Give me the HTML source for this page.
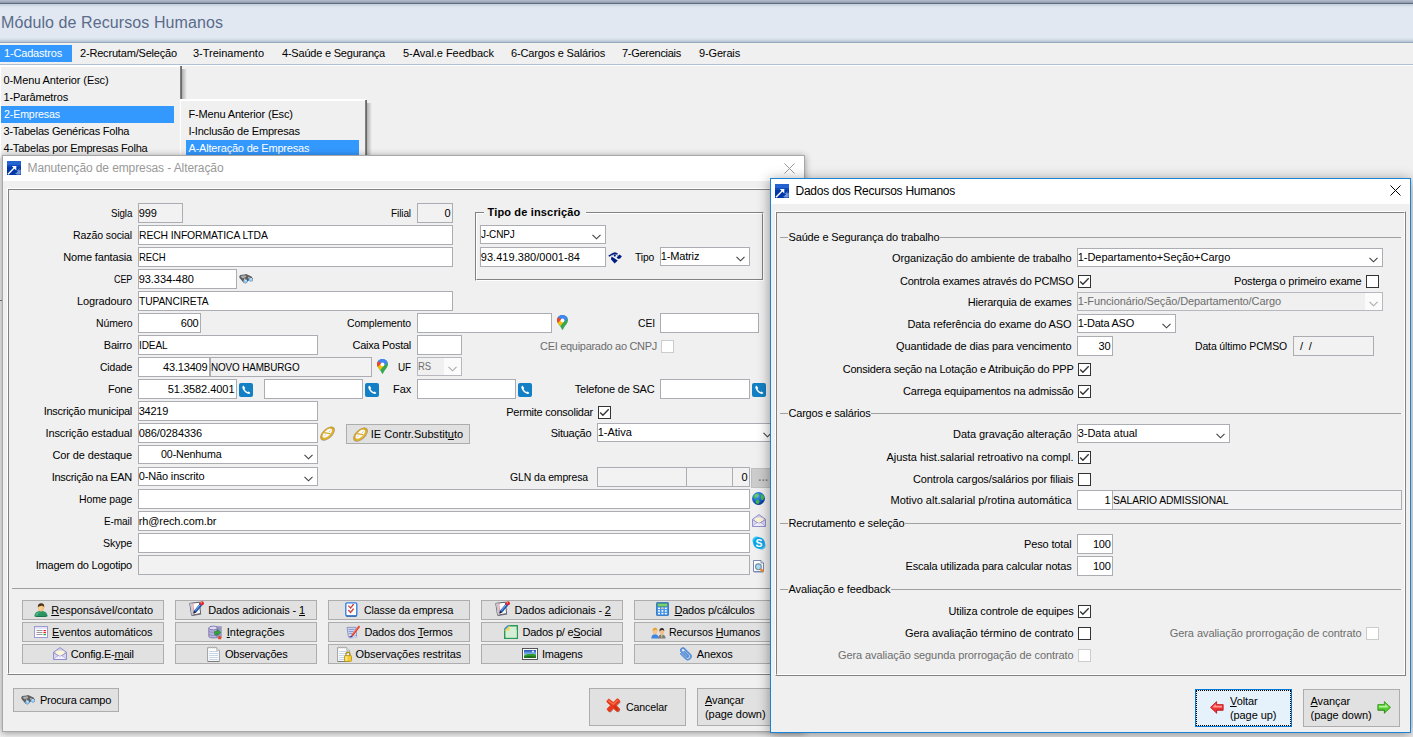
<!DOCTYPE html>
<html lang="pt-BR"><head><meta charset="utf-8"><title>Módulo de Recursos Humanos</title>
<style>
html,body{margin:0;padding:0;background:#f0f0f0;}
body{width:1413px;height:737px;overflow:hidden;font-family:"Liberation Sans",sans-serif;font-size:11px;}
#root{position:relative;width:1413px;height:737px;overflow:hidden;background:#f0f0f0;}
#root div,#root span.t,#root svg{position:absolute;box-sizing:border-box;}
span.t{white-space:pre;display:block;}
u{text-decoration:underline;text-underline-offset:1px;}

</style></head><body>
<div id="root">
<div style="left:0px;top:0px;width:1413px;height:3px;background:linear-gradient(#b3becd,#a3adbe 50%,#8b96a8);"></div>
<div style="left:0px;top:3px;width:1413px;height:1px;background:#5f6c80;"></div>
<div style="left:0px;top:4px;width:1413px;height:38px;background:linear-gradient(#c3cfdf 0,#ced8e4 1.5px,#d9e1eb 2.5px,#dfe6ef 3.5px,#e1e8f1 5px,#e1e8f1 33.5px,#dbe4ec 34.5px,#d3dce7 35.5px,#c6d1df 36.5px,#bac7d8 37.5px,#b4c2d4 38px);"></div>
<div style="left:0px;top:42px;width:1413px;height:1px;background:#98a8bc;"></div>
<span class="t" style="left:1.00px;top:12.90px;height:20px;line-height:20px;font-size:16px;letter-spacing:0.090px;color:#5b6b8b;">Módulo de Recursos Humanos</span>
<div style="left:0px;top:43px;width:1413px;height:22px;background:#f0f0f0;border-bottom:1px solid #b0bfd6;border-top:1px solid #f4f3f0;"></div>
<div style="left:0px;top:65px;width:1413px;height:1px;background:#fff;"></div>
<div style="left:0px;top:45px;width:72px;height:17px;background:#3399ff;"></div>
<span class="t" style="left:4.00px;top:46.00px;height:15px;line-height:15px;font-size:11px;letter-spacing:-0.175px;color:#fff;">1-Cadastros</span>
<span class="t" style="left:80.00px;top:46.00px;height:15px;line-height:15px;font-size:11px;letter-spacing:-0.182px;color:#000;">2-Recrutam/Seleção</span>
<span class="t" style="left:193.00px;top:46.00px;height:15px;line-height:15px;font-size:11px;letter-spacing:-0.010px;color:#000;">3-Treinamento</span>
<span class="t" style="left:282.00px;top:46.00px;height:15px;line-height:15px;font-size:11px;letter-spacing:-0.212px;color:#000;">4-Saúde e Segurança</span>
<span class="t" style="left:403.00px;top:46.00px;height:15px;line-height:15px;font-size:11px;letter-spacing:-0.031px;color:#000;">5-Aval.e Feedback</span>
<span class="t" style="left:511.00px;top:46.00px;height:15px;line-height:15px;font-size:11px;letter-spacing:-0.169px;color:#000;">6-Cargos e Salários</span>
<span class="t" style="left:622.00px;top:46.00px;height:15px;line-height:15px;font-size:11px;letter-spacing:-0.280px;color:#000;">7-Gerenciais</span>
<span class="t" style="left:699.00px;top:46.00px;height:15px;line-height:15px;font-size:11px;letter-spacing:-0.148px;color:#000;">9-Gerais</span>
<div style="left:0px;top:66px;width:182px;height:92px;background:#f0f0f0;border-top:1px solid #fff;border-left:1px solid #fff;"></div>
<div style="left:182px;top:69px;width:5px;height:30px;background:linear-gradient(90deg,#b0b0b0 0,rgba(205,205,205,0) 5px);"></div>
<div style="left:180px;top:66px;width:2px;height:33px;background:linear-gradient(90deg,#808080 0,#808080 1px,#686868 1px);"></div>
<div style="left:1px;top:106px;width:173px;height:17px;background:#3399ff;"></div>
<span class="t" style="left:3.50px;top:73.00px;height:15px;line-height:15px;font-size:11px;letter-spacing:-0.094px;color:#000;">0-Menu Anterior (Esc)</span>
<span class="t" style="left:3.50px;top:90.00px;height:15px;line-height:15px;font-size:11px;letter-spacing:-0.178px;color:#000;">1-Parâmetros</span>
<span class="t" style="left:3.50px;top:107.00px;height:15px;line-height:15px;font-size:11px;letter-spacing:-0.120px;color:#fff;transform:scaleX(0.9639);transform-origin:0 0;">2-Empresas</span>
<span class="t" style="left:3.50px;top:124.00px;height:15px;line-height:15px;font-size:11px;letter-spacing:-0.229px;color:#000;">3-Tabelas Genéricas Folha</span>
<span class="t" style="left:3.50px;top:141.00px;height:15px;line-height:15px;font-size:11px;letter-spacing:-0.207px;color:#000;">4-Tabelas por Empresas Folha</span>
<div style="left:180px;top:99px;width:186px;height:60px;background:#f0f0f0;border-top:2px solid #fff;border-left:1px solid #fff;"></div>
<div style="left:367px;top:103px;width:5px;height:56px;background:linear-gradient(90deg,#b0b0b0 0,rgba(205,205,205,0) 5px);"></div>
<div style="left:365px;top:100px;width:2px;height:59px;background:linear-gradient(90deg,#808080 0,#808080 1px,#686868 1px);"></div>
<div style="left:186px;top:140px;width:173px;height:17px;background:#3399ff;"></div>
<span class="t" style="left:188.50px;top:107.00px;height:15px;line-height:15px;font-size:11px;letter-spacing:-0.159px;color:#000;">F-Menu Anterior (Esc)</span>
<span class="t" style="left:188.50px;top:124.00px;height:15px;line-height:15px;font-size:11px;letter-spacing:-0.196px;color:#000;">I-Inclusão de Empresas</span>
<span class="t" style="left:188.50px;top:141.00px;height:15px;line-height:15px;font-size:11px;letter-spacing:-0.200px;color:#fff;">A-Alteração de Empresas</span>
<div style="left:0px;top:300px;width:3px;height:1px;background:#787878;"></div>
<div style="left:2px;top:155px;width:803px;height:577px;background:#f0f0f0;border:1px solid #a8a8a8;box-shadow:0 1px 7px rgba(0,0,0,.38);"></div>
<div style="left:3px;top:156px;width:801px;height:25px;background:#fff;"></div>
<svg style="left:7px;top:161px;" width="14" height="14" viewBox="0 0 14 14"><rect width="14" height="14" fill="#0038a8"/><rect width="14" height="4.5" fill="#2463d2"/><rect y="4.5" width="14" height="1.5" fill="#0f49bb"/><path d="M1 13.2 L7.6 6.6" stroke="#fff" stroke-width="1.4" fill="none"/><path d="M4.8 4.9 H9.3 V9.4 Z" fill="#fff"/><path d="M9.2 13.6 L12.6 6.2 L12.2 9.4 L13.8 8.4 L13.6 13.6Z" fill="#8fb0ea" opacity=".8"/><path d="M8.6 13 L10.2 11.4 M10.4 9.6 L11.2 8.8" stroke="#cfe0fa" stroke-width=".7"/></svg>
<span class="t" style="left:27.50px;top:159.50px;height:16px;line-height:16px;font-size:12px;letter-spacing:-0.102px;color:#999;">Manutenção de empresas - Alteração</span>
<svg style="left:784px;top:163px;" width="11" height="11" viewBox="0 0 11 11"><path d="M0.5 0.5 L10.5 10.5 M10.5 0.5 L0.5 10.5" stroke="#999" stroke-width="1" fill="none"/></svg>
<div style="left:7px;top:188px;width:792px;height:487px;border:1px solid #fff;border-right-color:#828282;border-bottom-color:#828282;"></div>
<div style="left:8px;top:189px;width:790px;height:485px;border:1px solid #828282;border-right-color:#fff;border-bottom-color:#fff;"></div>
<span class="t" style="left:110.75px;top:205.50px;height:15px;line-height:15px;font-size:11px;letter-spacing:-0.120px;color:#000;transform:scaleX(0.8903);transform-origin:0 0;">Sigla</span>
<div style="left:138px;top:203px;width:45px;height:20px;background:#f2f2f2;border:1px solid #abadb3;"></div>
<span class="t" style="left:138.75px;top:205.50px;height:15px;line-height:15px;font-size:11px;letter-spacing:-0.120px;color:#000;">999</span>
<span class="t" style="left:391.25px;top:205.50px;height:15px;line-height:15px;font-size:11px;letter-spacing:-0.120px;color:#000;transform:scaleX(0.9130);transform-origin:0 0;">Filial</span>
<div style="left:417px;top:203px;width:36px;height:20px;background:#f2f2f2;border:1px solid #abadb3;"></div>
<span class="t" style="left:444.52px;top:205.50px;height:15px;line-height:15px;font-size:11px;letter-spacing:-0.150px;color:#000;">0</span>
<span class="t" style="left:73.00px;top:227.50px;height:15px;line-height:15px;font-size:11px;letter-spacing:-0.120px;color:#000;transform:scaleX(0.9587);transform-origin:0 0;">Razão social</span>
<div style="left:138px;top:225px;width:315px;height:20px;background:#fff;border:1px solid #abadb3;"></div>
<span class="t" style="left:138.75px;top:227.50px;height:15px;line-height:15px;font-size:11px;letter-spacing:-0.120px;color:#000;transform:scaleX(0.9438);transform-origin:0 0;">RECH INFORMATICA LTDA</span>
<span class="t" style="left:63.25px;top:249.50px;height:15px;line-height:15px;font-size:11px;letter-spacing:-0.168px;color:#000;">Nome fantasia</span>
<div style="left:138px;top:247px;width:315px;height:20px;background:#fff;border:1px solid #abadb3;"></div>
<span class="t" style="left:138.75px;top:249.50px;height:15px;line-height:15px;font-size:11px;letter-spacing:-0.120px;color:#000;transform:scaleX(0.8634);transform-origin:0 0;">RECH</span>
<span class="t" style="left:113.75px;top:271.50px;height:15px;line-height:15px;font-size:11px;letter-spacing:-0.120px;color:#000;transform:scaleX(0.8197);transform-origin:0 0;">CEP</span>
<div style="left:138px;top:269px;width:99px;height:20px;background:#fff;border:1px solid #abadb3;"></div>
<span class="t" style="left:138.75px;top:271.50px;height:15px;line-height:15px;font-size:11px;letter-spacing:-0.067px;color:#000;">93.334-480</span>
<span class="t" style="left:77.00px;top:293.50px;height:15px;line-height:15px;font-size:11px;letter-spacing:-0.128px;color:#000;">Logradouro</span>
<div style="left:138px;top:291px;width:315px;height:20px;background:#fff;border:1px solid #abadb3;"></div>
<span class="t" style="left:138.75px;top:293.50px;height:15px;line-height:15px;font-size:11px;letter-spacing:-0.120px;color:#000;transform:scaleX(0.9306);transform-origin:0 0;">TUPANCIRETA</span>
<span class="t" style="left:95.50px;top:315.50px;height:15px;line-height:15px;font-size:11px;letter-spacing:-0.120px;color:#000;transform:scaleX(0.9504);transform-origin:0 0;">Número</span>
<div style="left:138px;top:313px;width:63px;height:20px;background:#fff;border:1px solid #abadb3;"></div>
<span class="t" style="left:180.75px;top:315.50px;height:15px;line-height:15px;font-size:11px;letter-spacing:-0.203px;color:#000;">600</span>
<span class="t" style="left:347.00px;top:315.50px;height:15px;line-height:15px;font-size:11px;letter-spacing:-0.120px;color:#000;transform:scaleX(0.9529);transform-origin:0 0;">Complemento</span>
<div style="left:417px;top:313px;width:135px;height:20px;background:#fff;border:1px solid #abadb3;"></div>
<span class="t" style="left:637.50px;top:315.50px;height:15px;line-height:15px;font-size:11px;letter-spacing:-0.120px;color:#000;transform:scaleX(0.9453);transform-origin:0 0;">CEI</span>
<div style="left:660px;top:313px;width:99px;height:20px;background:#fff;border:1px solid #abadb3;"></div>
<span class="t" style="left:103.75px;top:337.50px;height:15px;line-height:15px;font-size:11px;letter-spacing:-0.182px;color:#000;">Bairro</span>
<div style="left:138px;top:335px;width:180px;height:20px;background:#fff;border:1px solid #abadb3;"></div>
<span class="t" style="left:138.75px;top:337.50px;height:15px;line-height:15px;font-size:11px;letter-spacing:-0.120px;color:#000;transform:scaleX(0.9136);transform-origin:0 0;">IDEAL</span>
<span class="t" style="left:352.50px;top:337.50px;height:15px;line-height:15px;font-size:11px;letter-spacing:-0.272px;color:#000;">Caixa Postal</span>
<div style="left:417px;top:335px;width:45px;height:20px;background:#fff;border:1px solid #abadb3;"></div>
<span class="t" style="left:540.00px;top:338.50px;height:15px;line-height:15px;font-size:11px;letter-spacing:-0.296px;color:#6d6d6d;">CEI equiparado ao CNPJ</span>
<div style="left:661px;top:340px;width:13px;height:13px;background:#fff;border:1px solid #cccccc;"></div>
<span class="t" style="left:100.00px;top:359.50px;height:15px;line-height:15px;font-size:11px;letter-spacing:-0.120px;color:#000;transform:scaleX(0.9373);transform-origin:0 0;">Cidade</span>
<div style="left:138px;top:357px;width:72px;height:20px;background:#fff;border:1px solid #abadb3;"></div>
<span class="t" style="left:163.00px;top:359.50px;height:15px;line-height:15px;font-size:11px;letter-spacing:-0.174px;color:#000;">43.13409</span>
<div style="left:210px;top:357px;width:162px;height:20px;background:#f2f2f2;border:1px solid #abadb3;"></div>
<span class="t" style="left:210.75px;top:359.50px;height:15px;line-height:15px;font-size:11px;letter-spacing:-0.120px;color:#000;transform:scaleX(0.8969);transform-origin:0 0;">NOVO HAMBURGO</span>
<span class="t" style="left:398.25px;top:359.50px;height:15px;line-height:15px;font-size:11px;letter-spacing:-0.120px;color:#000;transform:scaleX(0.9008);transform-origin:0 0;">UF</span>
<div style="left:417px;top:357px;width:45px;height:19px;background:#f0f0f0;border:1px solid #b6b8be;"></div>
<div style="left:444px;top:358px;width:17px;height:17px;background:#fbfbfb;"></div>
<svg style="left:448px;top:365.6px;" width="9" height="6" viewBox="0 0 9 6"><path d="M0.5 0.8 L4.5 4.8 L8.5 0.8" stroke="#aaa" stroke-width="1.1" fill="none"/></svg>
<span class="t" style="left:417.75px;top:358.50px;height:15px;line-height:15px;font-size:11px;letter-spacing:-0.120px;color:#6d6d6d;transform:scaleX(0.8643);transform-origin:0 0;">RS</span>
<span class="t" style="left:108.00px;top:381.50px;height:15px;line-height:15px;font-size:11px;letter-spacing:-0.270px;color:#000;">Fone</span>
<div style="left:138px;top:379px;width:99px;height:20px;background:#fff;border:1px solid #abadb3;"></div>
<span class="t" style="left:167.75px;top:381.50px;height:15px;line-height:15px;font-size:11px;letter-spacing:-0.046px;color:#000;">51.3582.4001</span>
<div style="left:264px;top:379px;width:99px;height:20px;background:#fff;border:1px solid #abadb3;"></div>
<span class="t" style="left:393.00px;top:381.50px;height:15px;line-height:15px;font-size:11px;letter-spacing:-0.031px;color:#000;">Fax</span>
<div style="left:417px;top:379px;width:99px;height:20px;background:#fff;border:1px solid #abadb3;"></div>
<span class="t" style="left:574.75px;top:381.50px;height:15px;line-height:15px;font-size:11px;letter-spacing:-0.188px;color:#000;">Telefone de SAC</span>
<div style="left:660px;top:379px;width:90px;height:20px;background:#fff;border:1px solid #abadb3;"></div>
<span class="t" style="left:43.75px;top:403.50px;height:15px;line-height:15px;font-size:11px;letter-spacing:-0.279px;color:#000;">Inscrição municipal</span>
<div style="left:138px;top:401px;width:180px;height:20px;background:#fff;border:1px solid #abadb3;"></div>
<span class="t" style="left:138.75px;top:403.50px;height:15px;line-height:15px;font-size:11px;letter-spacing:-0.269px;color:#000;">34219</span>
<span class="t" style="left:506.25px;top:404.75px;height:15px;line-height:15px;font-size:11px;letter-spacing:-0.241px;color:#000;">Permite consolidar</span>
<div style="left:598px;top:406px;width:13px;height:13px;background:#fff;border:1px solid #333;"></div>
<svg style="left:598px;top:406px;" width="13" height="13" viewBox="0 0 13 13"><path d="M2.2 6.5 L4.9 9.2 L10.7 3.3" stroke="#333" stroke-width="1.35" fill="none"/></svg>
<span class="t" style="left:45.50px;top:425.50px;height:15px;line-height:15px;font-size:11px;letter-spacing:-0.121px;color:#000;">Inscrição estadual</span>
<div style="left:138px;top:423px;width:180px;height:20px;background:#fff;border:1px solid #abadb3;"></div>
<span class="t" style="left:138.75px;top:425.50px;height:15px;line-height:15px;font-size:11px;letter-spacing:-0.089px;color:#000;">086/0284336</span>
<span class="t" style="left:550.75px;top:425.50px;height:15px;line-height:15px;font-size:11px;letter-spacing:-0.289px;color:#000;">Situação</span>
<div style="left:597px;top:423px;width:180px;height:19px;background:#fff;border:1px solid #abadb3;"></div>
<svg style="left:763px;top:431.6px;" width="9" height="6" viewBox="0 0 9 6"><path d="M0.5 0.8 L4.5 4.8 L8.5 0.8" stroke="#404040" stroke-width="1.1" fill="none"/></svg>
<span class="t" style="left:597.75px;top:424.50px;height:15px;line-height:15px;font-size:11px;letter-spacing:-0.036px;color:#000;">1-Ativa</span>
<span class="t" style="left:52.50px;top:447.50px;height:15px;line-height:15px;font-size:11px;letter-spacing:-0.123px;color:#000;">Cor de destaque</span>
<div style="left:138px;top:445px;width:180px;height:19px;background:#fff;border:1px solid #abadb3;"></div>
<svg style="left:304px;top:453.6px;" width="9" height="6" viewBox="0 0 9 6"><path d="M0.5 0.8 L4.5 4.8 L8.5 0.8" stroke="#404040" stroke-width="1.1" fill="none"/></svg>
<span class="t" style="left:160.75px;top:446.50px;height:15px;line-height:15px;font-size:11px;letter-spacing:-0.120px;color:#000;transform:scaleX(0.9696);transform-origin:0 0;">00-Nenhuma</span>
<span class="t" style="left:51.75px;top:469.50px;height:15px;line-height:15px;font-size:11px;letter-spacing:-0.296px;color:#000;">Inscrição na EAN</span>
<div style="left:138px;top:467px;width:180px;height:19px;background:#fff;border:1px solid #abadb3;"></div>
<svg style="left:304px;top:475.6px;" width="9" height="6" viewBox="0 0 9 6"><path d="M0.5 0.8 L4.5 4.8 L8.5 0.8" stroke="#404040" stroke-width="1.1" fill="none"/></svg>
<span class="t" style="left:138.75px;top:468.50px;height:15px;line-height:15px;font-size:11px;letter-spacing:-0.151px;color:#000;">0-Não inscrito</span>
<span class="t" style="left:509.50px;top:470.25px;height:15px;line-height:15px;font-size:11px;letter-spacing:-0.120px;color:#000;transform:scaleX(0.9502);transform-origin:0 0;">GLN da empresa</span>
<div style="left:597px;top:467px;width:90px;height:20px;background:#f2f2f2;border:1px solid #abadb3;"></div>
<div style="left:686px;top:467px;width:47px;height:20px;background:#f2f2f2;border:1px solid #abadb3;"></div>
<div style="left:732px;top:467px;width:18px;height:20px;background:#f2f2f2;border:1px solid #abadb3;"></div>
<span class="t" style="left:741.52px;top:469.50px;height:15px;line-height:15px;font-size:11px;letter-spacing:-0.150px;color:#000;">0</span>
<div style="left:751px;top:468px;width:21px;height:20px;background:#cccccc;border:1px solid #bfbfbf;"></div>
<span class="t" style="left:758.30px;top:470.30px;height:15px;line-height:15px;font-size:11px;letter-spacing:0.300px;color:#838383;font-weight:bold;">...</span>
<span class="t" style="left:78.75px;top:491.50px;height:15px;line-height:15px;font-size:11px;letter-spacing:-0.120px;color:#000;transform:scaleX(0.9544);transform-origin:0 0;">Home page</span>
<div style="left:138px;top:489px;width:612px;height:20px;background:#fff;border:1px solid #abadb3;"></div>
<span class="t" style="left:104.25px;top:513.50px;height:15px;line-height:15px;font-size:11px;letter-spacing:-0.120px;color:#000;transform:scaleX(0.9113);transform-origin:0 0;">E-mail</span>
<div style="left:138px;top:511px;width:612px;height:20px;background:#fff;border:1px solid #abadb3;"></div>
<span class="t" style="left:138.75px;top:513.50px;height:15px;line-height:15px;font-size:11px;letter-spacing:-0.109px;color:#000;">rh@rech.com.br</span>
<span class="t" style="left:103.00px;top:535.50px;height:15px;line-height:15px;font-size:11px;letter-spacing:-0.120px;color:#000;transform:scaleX(0.9674);transform-origin:0 0;">Skype</span>
<div style="left:138px;top:533px;width:612px;height:20px;background:#fff;border:1px solid #abadb3;"></div>
<span class="t" style="left:35.75px;top:557.50px;height:15px;line-height:15px;font-size:11px;letter-spacing:-0.225px;color:#000;">Imagem do Logotipo</span>
<div style="left:138px;top:555px;width:612px;height:20px;background:#f2f2f2;border:1px solid #abadb3;"></div>
<div style="left:475px;top:212px;width:289px;height:69px;border:1px solid #828282;border-right-color:#fff;border-bottom-color:#fff;"></div>
<div style="left:476px;top:213px;width:287px;height:67px;border:1px solid #fff;border-right-color:#828282;border-bottom-color:#828282;"></div>
<div style="left:484px;top:205px;width:102px;height:14px;background:#f0f0f0;"></div>
<span class="t" style="left:487.50px;top:204.50px;height:15px;line-height:15px;font-size:11px;letter-spacing:0.160px;color:#000;font-weight:bold;">Tipo de inscrição</span>
<div style="left:480px;top:225px;width:126px;height:19px;background:#fff;border:1px solid #abadb3;"></div>
<svg style="left:592px;top:233.6px;" width="9" height="6" viewBox="0 0 9 6"><path d="M0.5 0.8 L4.5 4.8 L8.5 0.8" stroke="#404040" stroke-width="1.1" fill="none"/></svg>
<span class="t" style="left:480.75px;top:226.50px;height:15px;line-height:15px;font-size:11px;letter-spacing:-0.120px;color:#000;transform:scaleX(0.9080);transform-origin:0 0;">J-CNPJ</span>
<div style="left:480px;top:247px;width:126px;height:20px;background:#fff;border:1px solid #abadb3;"></div>
<span class="t" style="left:480.75px;top:249.50px;height:15px;line-height:15px;font-size:11px;letter-spacing:0.043px;color:#000;">93.419.380/0001-84</span>
<span class="t" style="left:635.00px;top:249.50px;height:15px;line-height:15px;font-size:11px;letter-spacing:-0.120px;color:#000;transform:scaleX(0.9381);transform-origin:0 0;">Tipo</span>
<div style="left:660px;top:247px;width:90px;height:19px;background:#fff;border:1px solid #abadb3;"></div>
<svg style="left:736px;top:255.6px;" width="9" height="6" viewBox="0 0 9 6"><path d="M0.5 0.8 L4.5 4.8 L8.5 0.8" stroke="#404040" stroke-width="1.1" fill="none"/></svg>
<span class="t" style="left:660.75px;top:248.50px;height:15px;line-height:15px;font-size:11px;letter-spacing:-0.154px;color:#000;">1-Matriz</span>
<svg style="left:239px;top:382.5px;" width="14" height="14" viewBox="0 0 14 14"><rect width="14" height="14" rx="2" fill="#137fc4"/><path d="M4.3 2.6 C3.2 3.3 3.1 4.6 3.8 6.1 C4.8 8.1 6.3 9.7 8.3 10.6 C9.7 11.2 10.8 11 11.4 10 L9.7 8.4 L8.5 9.1 C7.3 8.5 6.1 7.3 5.5 6 L6.3 4.9 Z" fill="#fff"/></svg>
<svg style="left:365px;top:382.5px;" width="14" height="14" viewBox="0 0 14 14"><rect width="14" height="14" rx="2" fill="#137fc4"/><path d="M4.3 2.6 C3.2 3.3 3.1 4.6 3.8 6.1 C4.8 8.1 6.3 9.7 8.3 10.6 C9.7 11.2 10.8 11 11.4 10 L9.7 8.4 L8.5 9.1 C7.3 8.5 6.1 7.3 5.5 6 L6.3 4.9 Z" fill="#fff"/></svg>
<svg style="left:518px;top:382.5px;" width="14" height="14" viewBox="0 0 14 14"><rect width="14" height="14" rx="2" fill="#137fc4"/><path d="M4.3 2.6 C3.2 3.3 3.1 4.6 3.8 6.1 C4.8 8.1 6.3 9.7 8.3 10.6 C9.7 11.2 10.8 11 11.4 10 L9.7 8.4 L8.5 9.1 C7.3 8.5 6.1 7.3 5.5 6 L6.3 4.9 Z" fill="#fff"/></svg>
<svg style="left:752px;top:382.5px;" width="14" height="14" viewBox="0 0 14 14"><rect width="14" height="14" rx="2" fill="#137fc4"/><path d="M4.3 2.6 C3.2 3.3 3.1 4.6 3.8 6.1 C4.8 8.1 6.3 9.7 8.3 10.6 C9.7 11.2 10.8 11 11.4 10 L9.7 8.4 L8.5 9.1 C7.3 8.5 6.1 7.3 5.5 6 L6.3 4.9 Z" fill="#fff"/></svg>
<svg style="left:239px;top:274px;" width="15" height="10" viewBox="0 0 15 10"><path d="M0.3 2.2 L1.2 0.9 L5.5 0.4 L7 0.1 L8.2 0.6 L12.5 2.6 L14 4.8 L13.6 7 L11.6 7.6 L9.8 6.6 L8.6 7.4 L8 8.8 L6.2 9.4 L4.3 8.4 L0.4 3.8 Z" fill="#5e5e5e"/><path d="M1.6 2 L6.5 1.2 L7.4 3 L3.2 4.2Z" fill="#b0b0b0"/><path d="M4.6 4.8 L6.3 4.4 L5.8 6 Z M8.8 3.2 L10.8 3.6 L10 4.8Z" fill="#fff"/><circle cx="6.4" cy="7.2" r="1.9" fill="#86c6fb"/><circle cx="11.8" cy="5.6" r="1.9" fill="#86c6fb"/><circle cx="6.6" cy="6.6" r=".8" fill="#d8eeff"/><circle cx="12" cy="5" r=".8" fill="#d8eeff"/></svg>
<svg style="left:608px;top:251.5px;" width="14" height="12" viewBox="0 0 14 12"><g fill="#001e82"><path d="M0.2 3.7 L4.6 1 L7 0.2 L9.6 1.2 L9.9 2.3 L7.2 1.9 L4.8 2.6 L1.5 4.8Z"/><circle cx="6.8" cy="3.6" r="1.1"/><path d="M4 3.2 A3.2 2.6 0 0 1 9.6 3.4" stroke="#001e82" stroke-width=".8" fill="none"/><path d="M8.6 5.6 L11.4 2.4 L13.9 4.2 L12.2 6.4 L10.2 6.9Z"/><path d="M3.6 4.6 L9.8 8.6 L6.6 11.4 L2.9 7.2Z"/></g></svg>
<svg style="left:556.7px;top:315.3px;" width="11" height="15" viewBox="0 0 11 15"><defs><clipPath id="pc556"><path d="M5.5 0 C8.6 0 11 2.3 11 5.3 C11 7.4 9.6 9 8.2 10.8 C7.2 12.1 6.4 13.3 6 14.6 C5.8 15.1 5.2 15.1 5 14.6 C4.6 13.3 3.8 12.1 2.8 10.8 C1.4 9 0 7.4 0 5.3 C0 2.3 2.4 0 5.5 0Z"/></clipPath></defs><g clip-path="url(#pc556)"><rect width="11" height="15" fill="#34a853"/><path d="M0 0 H11 V3.2 L7.6 6.6 L3.6 4.2 L1.5 1.8Z" fill="#4285f4"/><path d="M0 1.5 L1.8 2.2 L4.2 4.6 L1 8.4 L0 8Z" fill="#ea4335"/><path d="M4.2 4.6 L6.6 7 L3.2 11.2 L0.6 8Z" fill="#fbbc04"/><path d="M0 0 H4.5 L1.5 3Z" fill="#4285f4"/></g><circle cx="5.5" cy="5.4" r="1.9" fill="#fff"/></svg>
<svg style="left:376.5px;top:359.3px;" width="11" height="15" viewBox="0 0 11 15"><defs><clipPath id="pc376"><path d="M5.5 0 C8.6 0 11 2.3 11 5.3 C11 7.4 9.6 9 8.2 10.8 C7.2 12.1 6.4 13.3 6 14.6 C5.8 15.1 5.2 15.1 5 14.6 C4.6 13.3 3.8 12.1 2.8 10.8 C1.4 9 0 7.4 0 5.3 C0 2.3 2.4 0 5.5 0Z"/></clipPath></defs><g clip-path="url(#pc376)"><rect width="11" height="15" fill="#34a853"/><path d="M0 0 H11 V3.2 L7.6 6.6 L3.6 4.2 L1.5 1.8Z" fill="#4285f4"/><path d="M0 1.5 L1.8 2.2 L4.2 4.6 L1 8.4 L0 8Z" fill="#ea4335"/><path d="M4.2 4.6 L6.6 7 L3.2 11.2 L0.6 8Z" fill="#fbbc04"/><path d="M0 0 H4.5 L1.5 3Z" fill="#4285f4"/></g><circle cx="5.5" cy="5.4" r="1.9" fill="#fff"/></svg>
<svg style="left:319.8px;top:425.6px;" width="15" height="15" viewBox="0 0 15 15"><g transform="rotate(-43 7.5 7.5)"><ellipse cx="7.5" cy="7.6" rx="8.9" ry="5" fill="#8f8670" opacity=".75"/><ellipse cx="7.5" cy="7.4" rx="8.4" ry="4.5" fill="#d5a422"/><ellipse cx="7.5" cy="8.6" rx="7.4" ry="3" fill="#e0b22e"/><ellipse cx="7.5" cy="7.1" rx="6" ry="2.8" fill="#fdfcf8"/><path d="M5.6 4.6 L9.4 9.6" stroke="#d5a422" stroke-width="1.2"/><path d="M3 7.2 L5.6 6.9 M9.4 7.5 L12 7.1" stroke="#b8b2a2" stroke-width=".6"/></g></svg>
<svg style="left:752px;top:492px;" width="13" height="13" viewBox="0 0 13 13"><defs><radialGradient id="gg" cx=".38" cy=".3" r=".75"><stop offset="0" stop-color="#5aa6f8"/><stop offset=".55" stop-color="#1b5fd6"/><stop offset="1" stop-color="#0a2f8a"/></radialGradient></defs><circle cx="6.5" cy="6.5" r="6.4" fill="url(#gg)"/><path d="M1.4 4.4 L3 2.2 L5.2 1.2 L7 1.8 L6.6 3.4 L5 4.6 L4.6 6.2 L3 7 L1.6 6Z M8.2 2 L10.6 2.4 L12.2 4.6 L11.6 7.4 L10 8.2 L8.6 6.4 L9 4.2Z M3.6 8.4 L5.8 7.6 L7.6 9 L7 11.4 L5 12 L3.8 10.6Z" fill="#3dbb46"/><ellipse cx="4.6" cy="3.6" rx="2.4" ry="1.6" fill="#fff" opacity=".22"/></svg>
<svg style="left:752px;top:514px;" width="14" height="13" viewBox="0 0 14 13"><path d="M0.5 5.2 L7 0.6 L13.5 5.2 V12.5 H0.5Z" fill="#d9d6f3" stroke="#8a86c4" stroke-width=".9"/><path d="M2.2 4.6 Q7 1.4 11.8 4.6 L11.8 7 L7 9.4 L2.2 7Z" fill="#fbf6d8" stroke="#b9b4dc" stroke-width=".5"/><path d="M0.6 5.6 L7 9.6 L13.4 5.6 M0.8 12.2 L5.4 8.6 M13.2 12.2 L8.6 8.6" stroke="#8a86c4" stroke-width=".8" fill="none"/><path d="M0.9 12.1 L5.6 8.8 L7 9.7 L8.4 8.8 L13.1 12.1Z" fill="#f1effc"/></svg>
<svg style="left:752px;top:536px;" width="14" height="14" viewBox="0 0 14 14"><circle cx="4.6" cy="4.6" r="4.2" fill="#3cc1f3"/><circle cx="9.4" cy="9.4" r="4.2" fill="#3cc1f3"/><circle cx="7" cy="7" r="5.8" fill="#0aa5e6"/><text x="7" y="10.8" text-anchor="middle" font-family="Liberation Sans,sans-serif" font-weight="bold" font-size="10.5" fill="#fff">S</text></svg>
<svg style="left:753.4px;top:559.5px;" width="12" height="13" viewBox="0 0 12 13"><path d="M0.5 0.5 H8 L10.5 3 V11.5 H0.5Z" fill="#fff" stroke="#6b7aa8" stroke-width=".9"/><path d="M8 0.5 V3 H10.5" fill="#dfe5f5" stroke="#6b7aa8" stroke-width=".7"/><circle cx="5.4" cy="6.8" r="2.9" fill="#a8dcf8" stroke="#7d8fa5" stroke-width="1.1"/><path d="M8.2 9.6 L9.8 11.2" stroke="#f08a24" stroke-width="2.2" stroke-linecap="round"/><path d="M1 12.3 H10.2" stroke="#9aa3c4" stroke-width=".8"/></svg>
<div style="left:12px;top:588px;width:762px;height:1px;background:#a0a0a0;"></div>
<div style="left:346px;top:424px;width:124px;height:20px;background:#e1e1e1;border:1px solid #adadad;"></div>
<svg style="left:352.6px;top:426.6px;" width="15" height="15" viewBox="0 0 15 15"><g transform="rotate(-43 7.5 7.5)"><ellipse cx="7.5" cy="7.6" rx="8.9" ry="5" fill="#8f8670" opacity=".75"/><ellipse cx="7.5" cy="7.4" rx="8.4" ry="4.5" fill="#d5a422"/><ellipse cx="7.5" cy="8.6" rx="7.4" ry="3" fill="#e0b22e"/><ellipse cx="7.5" cy="7.1" rx="6" ry="2.8" fill="#fdfcf8"/><path d="M5.6 4.6 L9.4 9.6" stroke="#d5a422" stroke-width="1.2"/><path d="M3 7.2 L5.6 6.9 M9.4 7.5 L12 7.1" stroke="#b8b2a2" stroke-width=".6"/></g></svg>
<span class="t" style="left:370.75px;top:427.00px;height:15px;line-height:15px;font-size:11px;letter-spacing:0.041px;color:#000;">IE Contr.Substit<u>u</u>to</span>
<div style="left:22px;top:600px;width:142px;height:20px;background:#e1e1e1;border:1px solid #adadad;"></div>
<svg style="left:33.5px;top:602.8px;" width="14" height="14" viewBox="0 0 14 14"><path d="M0.6 13.2 C0.6 9.6 3 8 7 8 C11 8 13.4 9.6 13.4 13.2 C11 14.2 3 14.2 0.6 13.2Z" fill="#2b9463"/><path d="M1.2 13 C1.6 10.4 3.4 9 7 9 C4.6 10 3.4 11.4 3.2 13.6Z" fill="#4db684"/><path d="M0.6 13.2 C3 14.3 11 14.3 13.4 13.2 L13.4 12.4 C10 13.4 4 13.4 0.6 12.4Z" fill="#176b43"/><ellipse cx="7" cy="4.8" rx="3.1" ry="3.6" fill="#f4c07a"/><path d="M3.8 4.4 C3.6 1.4 5.4 0.2 7.2 0.3 C9.4 0.4 10.6 1.8 10.2 4.4 C9.4 2.8 8 2.6 6.4 2.9 C5.2 3.1 4.4 3.4 3.8 4.4Z" fill="#4a2f14"/><ellipse cx="6.2" cy="5.6" rx="1.6" ry="2" fill="#fbd9a4" opacity=".7"/></svg>
<span class="t" style="left:51.25px;top:603.00px;height:15px;line-height:15px;font-size:11px;letter-spacing:-0.052px;color:#000;"><u>R</u>esponsável/contato</span>
<div style="left:175px;top:600px;width:142px;height:20px;background:#e1e1e1;border:1px solid #adadad;"></div>
<svg style="left:188.6px;top:601.4px;" width="15" height="15" viewBox="0 0 15 15"><path d="M0.8 2.4 L10.4 1.2 L11.6 12.6 L2.6 14.2Z" fill="#fff" stroke="#5c5c68" stroke-width="1"/><path d="M1 2.6 L3.2 2.3 L4.6 13.8 L2.7 14.1Z" fill="#c9c9d6"/><path d="M3.8 2.4 L5.2 13.6" stroke="#e07c78" stroke-width=".8"/><path d="M2.6 14.2 L11.6 12.6 L12.4 13.4 L3.2 15Z" fill="#6e6e78"/><path d="M5 9.6 L10.8 2.8 L13.2 4.6 L7.2 11.6 L4.4 12.4Z" fill="#2558b0"/><path d="M6.2 9.6 L11.2 3.8" stroke="#86b4f0" stroke-width="1"/><circle cx="12.9" cy="2.3" r="2.1" fill="#d8242a"/><circle cx="12.3" cy="1.7" r=".8" fill="#f79a9a"/><path d="M4.4 12.4 L5 9.9 L7 11.5Z" fill="#1a1a1a"/></svg>
<span class="t" style="left:208.25px;top:603.00px;height:15px;line-height:15px;font-size:11px;letter-spacing:-0.146px;color:#000;">Dados adicionais - <u>1</u></span>
<div style="left:328px;top:600px;width:142px;height:20px;background:#e1e1e1;border:1px solid #adadad;"></div>
<svg style="left:344.8px;top:601.6px;" width="13" height="15" viewBox="0 0 13 15"><rect x=".8" y=".8" width="11" height="13" rx="1.2" fill="#fff" stroke="#2b7be0" stroke-width="1.3"/><path d="M1.4 14.2 H11.6" stroke="#1c4e9a" stroke-width=".9"/><path d="M3.4 3.6 L5.6 6 L8.6 2.2 M3.4 8 L5.6 10.4 L8.6 6.6" stroke="#d42a2a" stroke-width="1.3" fill="none"/><path d="M3.6 4.8 H8 M3.6 9.2 H8" stroke="#aaa" stroke-width=".6"/></svg>
<span class="t" style="left:363.75px;top:603.00px;height:15px;line-height:15px;font-size:11px;letter-spacing:-0.120px;color:#000;transform:scaleX(0.9624);transform-origin:0 0;">Classe da empresa</span>
<div style="left:481px;top:600px;width:142px;height:20px;background:#e1e1e1;border:1px solid #adadad;"></div>
<svg style="left:494.6px;top:601.4px;" width="15" height="15" viewBox="0 0 15 15"><path d="M0.8 2.4 L10.4 1.2 L11.6 12.6 L2.6 14.2Z" fill="#fff" stroke="#5c5c68" stroke-width="1"/><path d="M1 2.6 L3.2 2.3 L4.6 13.8 L2.7 14.1Z" fill="#c9c9d6"/><path d="M3.8 2.4 L5.2 13.6" stroke="#e07c78" stroke-width=".8"/><path d="M2.6 14.2 L11.6 12.6 L12.4 13.4 L3.2 15Z" fill="#6e6e78"/><path d="M5 9.6 L10.8 2.8 L13.2 4.6 L7.2 11.6 L4.4 12.4Z" fill="#2558b0"/><path d="M6.2 9.6 L11.2 3.8" stroke="#86b4f0" stroke-width="1"/><circle cx="12.9" cy="2.3" r="2.1" fill="#d8242a"/><circle cx="12.3" cy="1.7" r=".8" fill="#f79a9a"/><path d="M4.4 12.4 L5 9.9 L7 11.5Z" fill="#1a1a1a"/></svg>
<span class="t" style="left:514.50px;top:603.00px;height:15px;line-height:15px;font-size:11px;letter-spacing:-0.171px;color:#000;">Dados adicionais - <u>2</u></span>
<div style="left:634px;top:600px;width:142px;height:20px;background:#e1e1e1;border:1px solid #adadad;"></div>
<svg style="left:656px;top:602px;" width="13" height="14" viewBox="0 0 13 14"><rect x=".4" y=".4" width="12.2" height="13.2" rx="1" fill="#3f92e8" stroke="#2468b8" stroke-width=".8"/><rect x="1.8" y="1.6" width="9.4" height="2.8" fill="#7bd06a" stroke="#3b8a3a" stroke-width=".4"/><g fill="#fff"><rect x="2" y="5.6" width="2" height="1.5"/><rect x="5.4" y="5.6" width="2" height="1.5"/><rect x="8.8" y="5.6" width="2" height="1.5"/><rect x="2" y="8.2" width="2" height="1.5"/><rect x="5.4" y="8.2" width="2" height="1.5"/><rect x="8.8" y="8.2" width="2" height="1.5"/><rect x="2" y="10.8" width="2" height="1.5"/><rect x="5.4" y="10.8" width="2" height="1.5"/><rect x="8.8" y="10.8" width="2" height="1.5"/></g><rect x="5.4" y="5.6" width="2" height="1.5" fill="#f5b0a0"/></svg>
<span class="t" style="left:674.50px;top:603.00px;height:15px;line-height:15px;font-size:11px;letter-spacing:-0.236px;color:#000;"><u>D</u>ados p/cálculos</span>
<div style="left:22px;top:622px;width:142px;height:20px;background:#e1e1e1;border:1px solid #adadad;"></div>
<svg style="left:34px;top:626px;" width="14" height="12" viewBox="0 0 14 12"><rect x=".5" y=".5" width="13" height="11" fill="#fdfdff" stroke="#9d9bd0"/><rect x="1" y="1" width="12" height="2" fill="#e4e2f6"/><path d="M2.5 4.5 H8.5 M2.5 6.5 H8.5 M2.5 8.5 H8.5" stroke="#9a9a9a" stroke-width="1"/><rect x="9.5" y="4" width="2.4" height="1.2" fill="#e02020"/><rect x="9.5" y="6" width="2.4" height="1.2" fill="#e02020"/><rect x="9.5" y="8" width="2.4" height="1.2" fill="#22a52c"/></svg>
<span class="t" style="left:52.00px;top:625.00px;height:15px;line-height:15px;font-size:11px;letter-spacing:-0.086px;color:#000;"><u>E</u>ventos automáticos</span>
<div style="left:175px;top:622px;width:142px;height:20px;background:#e1e1e1;border:1px solid #adadad;"></div>
<svg style="left:208px;top:624.6px;" width="15" height="15" viewBox="0 0 15 15"><path d="M0.8 3 V11.6 C0.8 13.4 10.2 13.4 10.2 11.6 V3Z" fill="#b7b3dc" stroke="#6e6aa6" stroke-width=".8"/><ellipse cx="5.5" cy="3" rx="4.7" ry="1.9" fill="#dddaf2" stroke="#6e6aa6" stroke-width=".8"/><path d="M0.8 6 C0.8 7.8 10.2 7.8 10.2 6 M0.8 9 C0.8 10.8 10.2 10.8 10.2 9" stroke="#7f7bb6" stroke-width=".7" fill="none"/><rect x="8.2" y="1.2" width="5.6" height="12" fill="#8d89b8" opacity=".85"/><path d="M6.6 9.6 L6.6 6.4 L9.4 6.4 L9.4 4.6 L12.8 7.6 L9.6 10 L9.6 8.6 L8.4 8.6 L8.4 10.6Z" fill="#2fae3a" stroke="#0f6e1e" stroke-width=".5"/><path d="M10.2 14.2 C9.6 12.6 10.8 12 11 10.4 C12 11.2 12.2 12 12.6 11 C13.6 12.4 13.4 13.4 13 14.2Z" fill="#e84a1c"/></svg>
<span class="t" style="left:226.75px;top:625.00px;height:15px;line-height:15px;font-size:11px;letter-spacing:0.024px;color:#000;"><u>I</u>ntegrações</span>
<div style="left:328px;top:622px;width:142px;height:20px;background:#e1e1e1;border:1px solid #adadad;"></div>
<svg style="left:346px;top:625px;" width="15" height="14" viewBox="0 0 15 14"><path d="M1 2.4 L10 2.4 L10.6 11 L2.4 11.6Z" fill="#d4dcf4" stroke="#7a86b8" stroke-width=".8"/><path d="M2.4 4.4 H8.6 M2.6 6.4 H7.4 M2.8 8.4 H6.4" stroke="#6e82c4" stroke-width=".8"/><path d="M2.4 11.6 L10.6 11 L11 12.4 L3.2 13.4Z" fill="#eef0fa" stroke="#9aa3c8" stroke-width=".5"/><path d="M3.4 12 L6.4 11.6" stroke="#1a2a9a" stroke-width="1.1"/><path d="M5.6 9.4 L12.6 0.6 L14.2 1.8 L7.4 10.6 L5.2 11.4Z" fill="#e23a22"/><path d="M6.4 9.4 L12.8 1.4" stroke="#f8a090" stroke-width=".6"/></svg>
<span class="t" style="left:364.50px;top:625.00px;height:15px;line-height:15px;font-size:11px;letter-spacing:-0.220px;color:#000;">Dados dos <u>T</u>ermos</span>
<div style="left:481px;top:622px;width:142px;height:20px;background:#e1e1e1;border:1px solid #adadad;"></div>
<svg style="left:504px;top:625px;" width="14" height="14" viewBox="0 0 14 14"><path d="M5 0.7 H13.3 V13.3 H0.7 V5Z" fill="#d6eed6" stroke="#2b9a58" stroke-width="1.4"/><path d="M0.2 5.4 L5.4 0.2 L5.4 5.4Z" fill="#f4d548"/><path d="M0.2 5.4 L5.4 0.2 L3.2 0.4 L0.4 3.2Z" fill="#3f8ae0"/><path d="M2 12.4 H12.4 V5" stroke="#bfe3c2" stroke-width="1" fill="none"/></svg>
<span class="t" style="left:522.50px;top:625.00px;height:15px;line-height:15px;font-size:11px;letter-spacing:-0.245px;color:#000;">Dados p/ e<u>S</u>ocial</span>
<div style="left:634px;top:622px;width:142px;height:20px;background:#e1e1e1;border:1px solid #adadad;"></div>
<svg style="left:650.75px;top:626.6px;" width="15" height="12" viewBox="0 0 15 12"><path d="M0.3 11.4 C0.3 8.4 1.8 7.2 4 7.2 C6.2 7.2 7.6 8.4 7.6 11.4Z" fill="#3f86e0"/><ellipse cx="4" cy="4.6" rx="2.3" ry="2.7" fill="#f6c488"/><path d="M1.6 4.2 C1.4 1.6 2.8 0.6 4.2 0.7 C5.8 0.8 6.6 2 6.4 4 C5.6 2.8 4.6 2.7 3.4 3 C2.6 3.2 2 3.6 1.6 4.2Z" fill="#e8a020"/><path d="M7 11.6 C7 8.6 8.6 7.4 10.8 7.4 C13 7.4 14.6 8.6 14.6 11.6Z" fill="#7c7c80"/><path d="M10 7.6 L10.8 11.4 L11.6 7.6Z" fill="#e8d44a"/><ellipse cx="10.8" cy="4.8" rx="2.3" ry="2.7" fill="#f2bd86"/><path d="M8.4 4.4 C8.2 1.8 9.6 0.8 11 0.9 C12.6 1 13.4 2.2 13.2 4.2 C12.4 3 11.4 2.9 10.2 3.2 C9.4 3.4 8.8 3.8 8.4 4.4Z" fill="#2a2a2a"/></svg>
<span class="t" style="left:669.00px;top:625.00px;height:15px;line-height:15px;font-size:11px;letter-spacing:-0.120px;color:#000;transform:scaleX(0.9638);transform-origin:0 0;">Recursos <u>H</u>umanos</span>
<div style="left:22px;top:644px;width:142px;height:20px;background:#e1e1e1;border:1px solid #adadad;"></div>
<svg style="left:52.6px;top:647px;" width="14" height="13" viewBox="0 0 14 13"><path d="M0.5 5.2 L7 0.6 L13.5 5.2 V12.5 H0.5Z" fill="#d9d6f3" stroke="#8a86c4" stroke-width=".9"/><path d="M2.2 4.6 Q7 1.4 11.8 4.6 L11.8 7 L7 9.4 L2.2 7Z" fill="#fbf6d8" stroke="#b9b4dc" stroke-width=".5"/><path d="M0.6 5.6 L7 9.6 L13.4 5.6 M0.8 12.2 L5.4 8.6 M13.2 12.2 L8.6 8.6" stroke="#8a86c4" stroke-width=".8" fill="none"/><path d="M0.9 12.1 L5.6 8.8 L7 9.7 L8.4 8.8 L13.1 12.1Z" fill="#f1effc"/></svg>
<span class="t" style="left:70.75px;top:647.00px;height:15px;line-height:15px;font-size:11px;letter-spacing:-0.233px;color:#000;">Config.E-<u>m</u>ail</span>
<div style="left:175px;top:644px;width:142px;height:20px;background:#e1e1e1;border:1px solid #adadad;"></div>
<svg style="left:207px;top:646px;" width="13" height="16" viewBox="0 0 13 16"><path d="M0.6 1.6 H9.6 L12.4 4.4 V15.4 H0.6Z" fill="#fff" stroke="#8c8c8c" stroke-width=".8"/><path d="M9.6 1.6 V4.4 H12.4" fill="#e8e8e8" stroke="#9a9a9a" stroke-width=".6"/><path d="M2 5.5 H11 M2 7.5 H11 M2 9.5 H11 M2 11.5 H11 M2 13.5 H11" stroke="#b9cde4" stroke-width=".8"/><path d="M1.6 0.4 V2.4 M3.6 0.4 V2.4 M5.6 0.4 V2.4 M7.6 0.4 V2.4" stroke="#bbb" stroke-width=".9"/><path d="M0.8 15.6 H12.2" stroke="#666" stroke-width=".7"/></svg>
<span class="t" style="left:225.00px;top:647.00px;height:15px;line-height:15px;font-size:11px;letter-spacing:-0.210px;color:#000;">Observações</span>
<div style="left:328px;top:644px;width:142px;height:20px;background:#e1e1e1;border:1px solid #adadad;"></div>
<svg style="left:337px;top:646px;" width="13" height="16" viewBox="0 0 13 16"><path d="M0.6 1.6 H9.6 L12.4 4.4 V15.4 H0.6Z" fill="#fff" stroke="#8c8c8c" stroke-width=".8"/><path d="M9.6 1.6 V4.4 H12.4" fill="#e8e8e8" stroke="#9a9a9a" stroke-width=".6"/><path d="M2 5.5 H11 M2 7.5 H11 M2 9.5 H11 M2 11.5 H11 M2 13.5 H11" stroke="#b9cde4" stroke-width=".8"/><path d="M1.6 0.4 V2.4 M3.6 0.4 V2.4 M5.6 0.4 V2.4 M7.6 0.4 V2.4" stroke="#bbb" stroke-width=".9"/><path d="M0.8 15.6 H12.2" stroke="#666" stroke-width=".7"/></svg><svg style="left:343.5px;top:651px;" width="8" height="11" viewBox="0 0 8 11"><path d="M2 5 V3.2 C2 0.6 6 0.6 6 3.2 V5" stroke="#b38f1a" stroke-width="1.3" fill="none"/><rect x=".5" y="4.6" width="7" height="5.8" rx=".8" fill="#f6cf2e" stroke="#b38f1a" stroke-width=".8"/><rect x="1.4" y="5.4" width="2" height="4.2" fill="#fbe88a"/></svg>
<span class="t" style="left:355.50px;top:647.00px;height:15px;line-height:15px;font-size:11px;letter-spacing:-0.059px;color:#000;">Observações restritas</span>
<div style="left:481px;top:644px;width:142px;height:20px;background:#e1e1e1;border:1px solid #adadad;"></div>
<svg style="left:522px;top:648.2px;" width="16" height="12" viewBox="0 0 16 12"><defs><linearGradient id="sk" x1="0" y1="0" x2="0" y2="1"><stop offset="0" stop-color="#1f4fb6"/><stop offset="1" stop-color="#9fd0f6"/></linearGradient></defs><rect x=".5" y=".5" width="15" height="11" fill="#fff" stroke="#444" stroke-width=".9"/><rect x="2" y="2" width="12" height="5" fill="url(#sk)"/><path d="M2 7.4 C5 5.6 10 5.8 14 6.4 V10 H2Z" fill="#2f9a2a"/><path d="M2 8.8 C6 7.6 10 8 14 8.6 V10 H2Z" fill="#1f6e1c"/><circle cx="11" cy="3.6" r="1" fill="#eaf6ff"/></svg>
<span class="t" style="left:542.00px;top:647.00px;height:15px;line-height:15px;font-size:11px;letter-spacing:-0.243px;color:#000;">Imagens</span>
<div style="left:634px;top:644px;width:142px;height:20px;background:#e1e1e1;border:1px solid #adadad;"></div>
<svg style="left:677.6px;top:646.6px;" width="14.6" height="14.6" viewBox="0 0 15 15"><g transform="rotate(-45 7.5 7.5)" fill="none" stroke-linecap="round"><path d="M4.6 3.8 V10.8 A3.2 3.2 0 0 0 11 10.8 V2.8 A2.15 2.15 0 0 0 6.7 2.8 V10.4 A1.05 1.05 0 0 0 8.8 10.4 V4.8" stroke="#2f72cc" stroke-width="1.5"/><path d="M4.6 3.8 V10.8 A3.2 3.2 0 0 0 11 10.8 V2.8 A2.15 2.15 0 0 0 6.7 2.8 V10.4 A1.05 1.05 0 0 0 8.8 10.4 V4.8" stroke="#7fb6f4" stroke-width=".6"/></g></svg>
<span class="t" style="left:696.75px;top:647.00px;height:15px;line-height:15px;font-size:11px;letter-spacing:-0.159px;color:#000;">Anexos</span>
<div style="left:13px;top:688px;width:106px;height:24px;background:#e1e1e1;border:1px solid #adadad;"></div>
<svg style="left:20.5px;top:695px;" width="15" height="10" viewBox="0 0 15 10"><path d="M0.3 2.2 L1.2 0.9 L5.5 0.4 L7 0.1 L8.2 0.6 L12.5 2.6 L14 4.8 L13.6 7 L11.6 7.6 L9.8 6.6 L8.6 7.4 L8 8.8 L6.2 9.4 L4.3 8.4 L0.4 3.8 Z" fill="#5e5e5e"/><path d="M1.6 2 L6.5 1.2 L7.4 3 L3.2 4.2Z" fill="#b0b0b0"/><path d="M4.6 4.8 L6.3 4.4 L5.8 6 Z M8.8 3.2 L10.8 3.6 L10 4.8Z" fill="#fff"/><circle cx="6.4" cy="7.2" r="1.9" fill="#86c6fb"/><circle cx="11.8" cy="5.6" r="1.9" fill="#86c6fb"/><circle cx="6.6" cy="6.6" r=".8" fill="#d8eeff"/><circle cx="12" cy="5" r=".8" fill="#d8eeff"/></svg>
<span class="t" style="left:40.00px;top:693.40px;height:15px;line-height:15px;font-size:11px;letter-spacing:-0.276px;color:#000;">Procura campo</span>
<div style="left:589px;top:688px;width:97px;height:38px;background:#e1e1e1;border:1px solid #adadad;"></div>
<svg style="left:605.8px;top:698.4px;" width="15.6" height="15.6" viewBox="-0.6 -0.6 18 18"><path d="M3.2 0.8 L7.8 4.6 L11.8 0.6 Q13 0 14 1 L15 2.4 Q15.6 3.4 14.6 4.2 L10.8 7.6 L14.6 11.4 Q15.4 12.4 14.6 13.2 L13.2 14.6 Q12.2 15.4 11.2 14.4 L7.8 10.8 L4.4 14.6 Q3.4 15.6 2.4 14.6 L1 13.2 Q0.2 12.2 1.2 11.2 L4.8 7.8 L0.8 4.4 Q0 3.4 0.8 2.4 L1.8 1.2 Q2.4 0.4 3.2 0.8Z" fill="#5a2010" opacity=".5" transform="translate(.9 1)"/><path d="M3.2 0.8 L7.8 4.6 L11.8 0.6 Q13 0 14 1 L15 2.4 Q15.6 3.4 14.6 4.2 L10.8 7.6 L14.6 11.4 Q15.4 12.4 14.6 13.2 L13.2 14.6 Q12.2 15.4 11.2 14.4 L7.8 10.8 L4.4 14.6 Q3.4 15.6 2.4 14.6 L1 13.2 Q0.2 12.2 1.2 11.2 L4.8 7.8 L0.8 4.4 Q0 3.4 0.8 2.4 L1.8 1.2 Q2.4 0.4 3.2 0.8Z" fill="#e9391a" stroke="#e9391a" stroke-width=".9" stroke-linejoin="round"/><path d="M2.6 1.6 L7.8 5.8 L12.4 1.4 L13.6 2.4 L8 7.4 L1.6 3.2Z" fill="#ff8a55" opacity=".75"/><path d="M7.8 9.6 L12.4 14 L13.8 12.6 L9.6 8.2Z" fill="#c22a10" opacity=".6"/></svg>
<span class="t" style="left:625.50px;top:700.00px;height:15px;line-height:15px;font-size:11px;letter-spacing:-0.120px;color:#000;transform:scaleX(0.9635);transform-origin:0 0;">Cancelar</span>
<div style="left:697px;top:688px;width:110px;height:38px;background:#e1e1e1;border:1px solid #adadad;"></div>
<span class="t" style="left:705.00px;top:693.00px;height:15px;line-height:15px;font-size:11px;letter-spacing:-0.129px;color:#000;"><u>A</u>vançar</span>
<span class="t" style="left:705.00px;top:707.00px;height:15px;line-height:15px;font-size:11px;letter-spacing:-0.060px;color:#000;">(page down)</span>
<div style="left:770px;top:178px;width:641px;height:555px;background:#f0f0f0;border:1px solid #1883d7;box-shadow:0 2px 12px rgba(0,0,0,.42);"></div>
<div style="left:771px;top:179px;width:639px;height:25px;background:#fff;"></div>
<svg style="left:775px;top:184px;" width="14" height="14" viewBox="0 0 14 14"><rect width="14" height="14" fill="#0038a8"/><rect width="14" height="4.5" fill="#2463d2"/><rect y="4.5" width="14" height="1.5" fill="#0f49bb"/><path d="M1 13.2 L7.6 6.6" stroke="#fff" stroke-width="1.4" fill="none"/><path d="M4.8 4.9 H9.3 V9.4 Z" fill="#fff"/><path d="M9.2 13.6 L12.6 6.2 L12.2 9.4 L13.8 8.4 L13.6 13.6Z" fill="#8fb0ea" opacity=".8"/><path d="M8.6 13 L10.2 11.4 M10.4 9.6 L11.2 8.8" stroke="#cfe0fa" stroke-width=".7"/></svg>
<span class="t" style="left:795.50px;top:182.50px;height:16px;line-height:16px;font-size:12px;letter-spacing:-0.253px;color:#000;">Dados dos Recursos Humanos</span>
<svg style="left:1390px;top:185px;" width="11" height="11" viewBox="0 0 11 11"><path d="M0.5 0.5 L10.5 10.5 M10.5 0.5 L0.5 10.5" stroke="#000" stroke-width="1" fill="none"/></svg>
<div style="left:775px;top:211px;width:631px;height:465px;border:1px solid #fff;border-right-color:#828282;border-bottom-color:#828282;"></div>
<div style="left:776px;top:212px;width:629px;height:463px;border:1px solid #828282;border-right-color:#fff;border-bottom-color:#fff;"></div>
<div style="left:780px;top:237px;width:621px;height:1px;background:#a0a0a0;"></div>
<div style="left:788px;top:230.5px;width:151.75px;height:14px;background:#f0f0f0;"></div>
<span class="t" style="left:788.50px;top:230.00px;height:15px;line-height:15px;font-size:11px;letter-spacing:-0.150px;color:#000;">Saúde e Segurança do trabalho</span>
<div style="left:780px;top:413px;width:621px;height:1px;background:#a0a0a0;"></div>
<div style="left:788px;top:406.5px;width:82.75px;height:14px;background:#f0f0f0;"></div>
<span class="t" style="left:788.50px;top:406.00px;height:15px;line-height:15px;font-size:11px;letter-spacing:-0.211px;color:#000;">Cargos e salários</span>
<div style="left:780px;top:523px;width:621px;height:1px;background:#a0a0a0;"></div>
<div style="left:788px;top:516.5px;width:116.75px;height:14px;background:#f0f0f0;"></div>
<span class="t" style="left:788.50px;top:516.00px;height:15px;line-height:15px;font-size:11px;letter-spacing:-0.147px;color:#000;">Recrutamento e seleção</span>
<div style="left:780px;top:589px;width:621px;height:1px;background:#a0a0a0;"></div>
<div style="left:788px;top:582.5px;width:102.75px;height:14px;background:#f0f0f0;"></div>
<span class="t" style="left:788.50px;top:582.00px;height:15px;line-height:15px;font-size:11px;letter-spacing:-0.119px;color:#000;">Avaliação e feedback</span>
<span class="t" style="left:892.00px;top:250.60px;height:15px;line-height:15px;font-size:11px;letter-spacing:-0.131px;color:#000;">Organização do ambiente de trabalho</span>
<div style="left:1077px;top:248px;width:306px;height:19px;background:#fff;border:1px solid #abadb3;"></div>
<svg style="left:1369px;top:256.6px;" width="9" height="6" viewBox="0 0 9 6"><path d="M0.5 0.8 L4.5 4.8 L8.5 0.8" stroke="#404040" stroke-width="1.1" fill="none"/></svg>
<span class="t" style="left:1077.75px;top:249.50px;height:15px;line-height:15px;font-size:11px;letter-spacing:-0.038px;color:#000;">1-Departamento+Seção+Cargo</span>
<span class="t" style="left:900.00px;top:274.00px;height:15px;line-height:15px;font-size:11px;letter-spacing:-0.233px;color:#000;">Controla exames através do PCMSO</span>
<div style="left:1078px;top:275px;width:13px;height:13px;background:#fff;border:1px solid #333;"></div>
<svg style="left:1078px;top:275px;" width="13" height="13" viewBox="0 0 13 13"><path d="M2.2 6.5 L4.9 9.2 L10.7 3.3" stroke="#333" stroke-width="1.35" fill="none"/></svg>
<span class="t" style="left:1234.00px;top:274.00px;height:15px;line-height:15px;font-size:11px;letter-spacing:-0.182px;color:#000;">Posterga o primeiro exame</span>
<div style="left:1366px;top:275px;width:13px;height:13px;background:#fff;border:1px solid #333;"></div>
<span class="t" style="left:967.75px;top:294.60px;height:15px;line-height:15px;font-size:11px;letter-spacing:-0.194px;color:#000;">Hierarquia de exames</span>
<div style="left:1077px;top:292px;width:306px;height:19px;background:#f0f0f0;border:1px solid #b6b8be;"></div>
<div style="left:1365px;top:293px;width:17px;height:17px;background:#fbfbfb;"></div>
<svg style="left:1369px;top:300.6px;" width="9" height="6" viewBox="0 0 9 6"><path d="M0.5 0.8 L4.5 4.8 L8.5 0.8" stroke="#aaa" stroke-width="1.1" fill="none"/></svg>
<span class="t" style="left:1077.75px;top:293.50px;height:15px;line-height:15px;font-size:11px;letter-spacing:-0.106px;color:#6d6d6d;">1-Funcionário/Seção/Departamento/Cargo</span>
<span class="t" style="left:907.50px;top:316.60px;height:15px;line-height:15px;font-size:11px;letter-spacing:-0.114px;color:#000;">Data referência do exame do ASO</span>
<div style="left:1077px;top:314px;width:99px;height:19px;background:#fff;border:1px solid #abadb3;"></div>
<svg style="left:1162px;top:322.6px;" width="9" height="6" viewBox="0 0 9 6"><path d="M0.5 0.8 L4.5 4.8 L8.5 0.8" stroke="#404040" stroke-width="1.1" fill="none"/></svg>
<span class="t" style="left:1077.75px;top:315.50px;height:15px;line-height:15px;font-size:11px;letter-spacing:-0.245px;color:#000;">1-Data ASO</span>
<span class="t" style="left:896.00px;top:338.60px;height:15px;line-height:15px;font-size:11px;letter-spacing:-0.126px;color:#000;">Quantidade de dias para vencimento</span>
<div style="left:1077px;top:336px;width:36px;height:20px;background:#fff;border:1px solid #abadb3;"></div>
<span class="t" style="left:1098.50px;top:338.50px;height:15px;line-height:15px;font-size:11px;letter-spacing:-0.125px;color:#000;">30</span>
<span class="t" style="left:1195.00px;top:338.60px;height:15px;line-height:15px;font-size:11px;letter-spacing:-0.120px;color:#000;transform:scaleX(0.9485);transform-origin:0 0;">Data último PCMSO</span>
<div style="left:1293px;top:336px;width:81px;height:20px;background:#f2f2f2;border:1px solid #abadb3;"></div>
<span class="t" style="left:1300.00px;top:338.50px;height:15px;line-height:15px;font-size:11px;letter-spacing:-0.150px;color:#000;">/  /</span>
<span class="t" style="left:842.75px;top:361.75px;height:15px;line-height:15px;font-size:11px;letter-spacing:-0.221px;color:#000;">Considera seção na Lotação e Atribuição do PPP</span>
<div style="left:1078px;top:363px;width:13px;height:13px;background:#fff;border:1px solid #333;"></div>
<svg style="left:1078px;top:363px;" width="13" height="13" viewBox="0 0 13 13"><path d="M2.2 6.5 L4.9 9.2 L10.7 3.3" stroke="#333" stroke-width="1.35" fill="none"/></svg>
<span class="t" style="left:903.00px;top:383.70px;height:15px;line-height:15px;font-size:11px;letter-spacing:-0.213px;color:#000;">Carrega equipamentos na admissão</span>
<div style="left:1078px;top:385px;width:13px;height:13px;background:#fff;border:1px solid #333;"></div>
<svg style="left:1078px;top:385px;" width="13" height="13" viewBox="0 0 13 13"><path d="M2.2 6.5 L4.9 9.2 L10.7 3.3" stroke="#333" stroke-width="1.35" fill="none"/></svg>
<span class="t" style="left:953.00px;top:426.60px;height:15px;line-height:15px;font-size:11px;letter-spacing:-0.059px;color:#000;">Data gravação alteração</span>
<div style="left:1077px;top:424px;width:153px;height:19px;background:#fff;border:1px solid #abadb3;"></div>
<svg style="left:1216px;top:432.6px;" width="9" height="6" viewBox="0 0 9 6"><path d="M0.5 0.8 L4.5 4.8 L8.5 0.8" stroke="#404040" stroke-width="1.1" fill="none"/></svg>
<span class="t" style="left:1077.75px;top:425.50px;height:15px;line-height:15px;font-size:11px;letter-spacing:-0.036px;color:#000;">3-Data atual</span>
<span class="t" style="left:886.50px;top:449.75px;height:15px;line-height:15px;font-size:11px;letter-spacing:-0.032px;color:#000;">Ajusta hist.salarial retroativo na compl.</span>
<div style="left:1078px;top:451px;width:13px;height:13px;background:#fff;border:1px solid #333;"></div>
<svg style="left:1078px;top:451px;" width="13" height="13" viewBox="0 0 13 13"><path d="M2.2 6.5 L4.9 9.2 L10.7 3.3" stroke="#333" stroke-width="1.35" fill="none"/></svg>
<span class="t" style="left:913.00px;top:471.75px;height:15px;line-height:15px;font-size:11px;letter-spacing:-0.127px;color:#000;">Controla cargos/salários por filiais</span>
<div style="left:1078px;top:473px;width:13px;height:13px;background:#fff;border:1px solid #333;"></div>
<span class="t" style="left:890.50px;top:492.60px;height:15px;line-height:15px;font-size:11px;letter-spacing:-0.015px;color:#000;">Motivo alt.salarial p/rotina automática</span>
<div style="left:1077px;top:490px;width:36px;height:20px;background:#fff;border:1px solid #abadb3;"></div>
<span class="t" style="left:1104.53px;top:492.50px;height:15px;line-height:15px;font-size:11px;letter-spacing:-0.150px;color:#000;">1</span>
<div style="left:1112px;top:490px;width:290px;height:20px;background:#f2f2f2;border:1px solid #abadb3;"></div>
<span class="t" style="left:1112.75px;top:492.50px;height:15px;line-height:15px;font-size:11px;letter-spacing:-0.120px;color:#000;transform:scaleX(0.9387);transform-origin:0 0;">SALARIO ADMISSIONAL</span>
<span class="t" style="left:1024.00px;top:537.10px;height:15px;line-height:15px;font-size:11px;letter-spacing:-0.142px;color:#000;">Peso total</span>
<div style="left:1077px;top:534px;width:36px;height:20px;background:#fff;border:1px solid #abadb3;"></div>
<span class="t" style="left:1093.00px;top:536.50px;height:15px;line-height:15px;font-size:11px;letter-spacing:-0.286px;color:#000;">100</span>
<span class="t" style="left:905.50px;top:559.10px;height:15px;line-height:15px;font-size:11px;letter-spacing:-0.179px;color:#000;">Escala utilizada para calcular notas</span>
<div style="left:1077px;top:556px;width:36px;height:20px;background:#fff;border:1px solid #abadb3;"></div>
<span class="t" style="left:1093.00px;top:558.50px;height:15px;line-height:15px;font-size:11px;letter-spacing:-0.286px;color:#000;">100</span>
<span class="t" style="left:948.50px;top:604.00px;height:15px;line-height:15px;font-size:11px;letter-spacing:-0.149px;color:#000;">Utiliza controle de equipes</span>
<div style="left:1078px;top:605px;width:13px;height:13px;background:#fff;border:1px solid #333;"></div>
<svg style="left:1078px;top:605px;" width="13" height="13" viewBox="0 0 13 13"><path d="M2.2 6.5 L4.9 9.2 L10.7 3.3" stroke="#333" stroke-width="1.35" fill="none"/></svg>
<span class="t" style="left:905.00px;top:626.00px;height:15px;line-height:15px;font-size:11px;letter-spacing:-0.098px;color:#000;">Gera avaliação término de contrato</span>
<div style="left:1078px;top:627px;width:13px;height:13px;background:#fff;border:1px solid #333;"></div>
<span class="t" style="left:1169.75px;top:626.00px;height:15px;line-height:15px;font-size:11px;letter-spacing:-0.071px;color:#6d6d6d;">Gera avaliação prorrogação de contrato</span>
<div style="left:1366px;top:627px;width:13px;height:13px;background:#fff;border:1px solid #cccccc;"></div>
<span class="t" style="left:838.00px;top:648.00px;height:15px;line-height:15px;font-size:11px;letter-spacing:-0.092px;color:#6d6d6d;">Gera avaliação segunda prorrogação de contrato</span>
<div style="left:1078px;top:649px;width:13px;height:13px;background:#fff;border:1px solid #cccccc;"></div>
<div style="left:1195px;top:689px;width:97px;height:38px;background:#e5f1fb;border:1px solid #0078d7;"></div>
<div style="left:1196px;top:690px;width:95px;height:36px;border:1px dotted #000;"></div>
<span class="t" style="left:1230.00px;top:694.00px;height:15px;line-height:15px;font-size:11px;letter-spacing:-0.107px;color:#000;"><u>V</u>oltar</span>
<span class="t" style="left:1230.00px;top:708.00px;height:15px;line-height:15px;font-size:11px;letter-spacing:-0.094px;color:#000;">(page up)</span>
<div style="left:1303px;top:689px;width:97px;height:38px;background:#e1e1e1;border:1px solid #adadad;"></div>
<span class="t" style="left:1310.50px;top:694.00px;height:15px;line-height:15px;font-size:11px;letter-spacing:-0.094px;color:#000;"><u>A</u>vançar</span>
<span class="t" style="left:1310.50px;top:708.00px;height:15px;line-height:15px;font-size:11px;letter-spacing:0.009px;color:#000;">(page down)</span>
<svg style="left:1210px;top:700.6px;" width="14" height="13" viewBox="0 0 14 13"><path d="M0.5 6.4 L6.6 0.6 V3.6 H13.2 V9.2 H6.6 V12.2Z" fill="#f03434" stroke="#c01c1c" stroke-width=".8" stroke-linejoin="round"/><path d="M2.4 6.2 L5.8 3 V4.8 H12 V6.4 H4Z" fill="#ffa0a0" opacity=".95"/><path d="M6.6 9.2 H13.2 M6.6 12.2 L6.6 9.2" stroke="#8c0c0c" stroke-width=".6" fill="none" opacity=".6"/></svg>
<svg style="left:1377px;top:700.6px;" width="14" height="13" viewBox="0 0 14 13"><path d="M13.5 6.4 L7.4 0.6 V3.6 H0.8 V9.2 H7.4 V12.2Z" fill="#55cc30" stroke="#2e9414" stroke-width=".8" stroke-linejoin="round"/><path d="M11.6 6.2 L8.2 3 V4.8 H2 V6.4 H10Z" fill="#bdf3a2" opacity=".95"/><path d="M0.8 9.2 H7.4 V12.2" stroke="#16600a" stroke-width=".6" fill="none" opacity=".6"/></svg>
</div>
</body></html>
